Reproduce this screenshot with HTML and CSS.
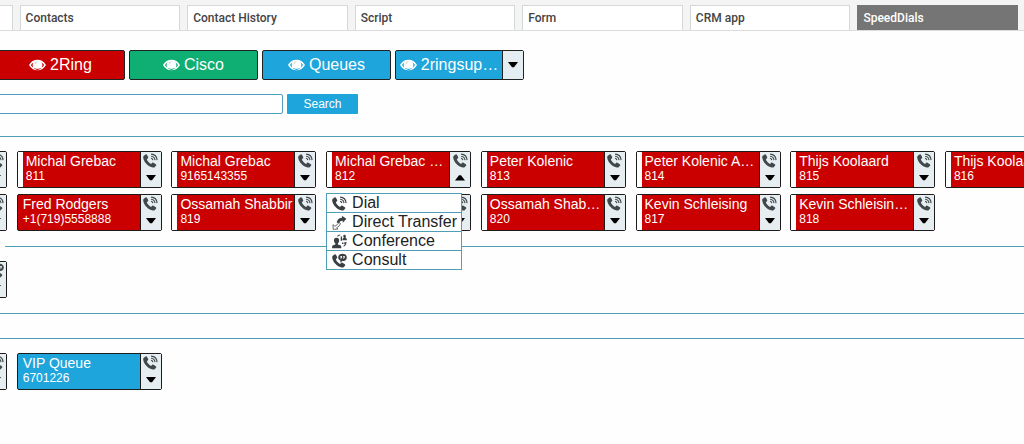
FILE: index.html
```html
<!DOCTYPE html>
<html lang="en">
<head>
<meta charset="utf-8">
<title>SpeedDials</title>
<link rel="stylesheet" href="styles.css">
</head>
<body>
<svg class="sprite" aria-hidden="true">
  <symbol id="eye" viewBox="0 0 18 12">
    <path fill="currentColor" fill-rule="evenodd" d="M0 6C2 2.300 5.200 .4 9 .4s7 1.900 9 5.600c-2 3.700-5.200 5.600-9 5.600S2 9.700 0 6zM2 6c1.600 2.700 4 4 7 4s5.400-1.300 7-4c-.8-1.300-1.800-2.300-3-3a5 5 0 1 1-8 0C3.800 3.700 2.800 4.700 2 6z"/>
    <circle cx="9" cy="5.400" r="4.400" fill="currentColor"/>
    <path d="M6.300 5.300A2.700 2.700 0 0 1 9 2.600" fill="none" stroke="#000" stroke-opacity=".25" stroke-width=".8"/>
  </symbol>
  <symbol id="handset" viewBox="0 0 16 16">
    <path fill="currentColor" d="M.9 2.900 2.700 1.500c.6-.4 1.200-.3 1.500.3l1.300 2.500c.3.600.1 1.100-.4 1.500l-1 .7c.3 1.900 2.300 4.300 4.500 5.100l1-1c.5-.4 1-.5 1.500-.2l2.600 1.500c.6.400.7 1 .3 1.500l-1.300 1.400c-.6.600-1.300.8-2.100.7C5.300 14.600.7 9.300.2 4.700c-.1-.8.100-1.400.7-1.800z"/>
  </symbol>
  <symbol id="call" viewBox="0 0 16 16">
    <use href="#handset"/>
    <path fill="none" stroke="currentColor" stroke-width="1.200" d="M8.600 5.600c1.100.2 1.800.9 1.900 2M8.600 3.400c2.400.2 4 1.800 4.200 4.200M8.600 1.200c3.700.2 6.200 2.700 6.400 6.400"/>
  </symbol>
  <symbol id="consult" viewBox="0 0 16 16">
    <use href="#handset"/>
    <path fill="currentColor" d="M11.200.8c2.700 0 4.600 1.600 4.600 3.900s-1.900 3.900-4.600 3.900L8.700 10l.3-2C7.500 7.300 6.600 6.200 6.600 4.700c0-2.300 1.900-3.900 4.600-3.900z"/>
    <path fill="#fff" d="M9 3.300h1.600v1.500L9.800 6H9l.4-1.200H9zM12 3.300h1.600v1.500L12.800 6H12l.4-1.200H12z"/>
  </symbol>
  <symbol id="transfer" viewBox="0 0 16 16">
    <path fill="currentColor" d="M10.500.8 15.300 4l-3.700 4.300-.3-2.200c-2-.2-3.200.9-4.300 3L5 8c.7-3.300 2.700-5.100 5.700-5.100z"/>
    <path fill="#fff" stroke="currentColor" stroke-width=".8" d="m1 10.300.3 5 5-.3-1.400-1.400c2.200-1 3.400-2.400 4.100-4.600L7.300 8c-.9 1.800-2.200 3-4.300 3.900z"/>
  </symbol>
  <symbol id="conference" viewBox="0 0 16 16">
    <path fill="currentColor" d="M4.800 4c2 0 3 1.300 2.800 3.300-.1 1.300-.7 2.200-1.300 2.800v1l2.500 1c.8.400 1.100.9 1.100 1.700v1.400H.1v-1.400c0-.8.300-1.300 1.100-1.700l2.400-1v-1C2.800 9.500 2.200 8.600 2.100 7.300 1.900 5.300 2.800 4 4.800 4z"/>
    <path fill="none" stroke="currentColor" stroke-width="1.200" d="M5.800 2.500C6.500 1.500 7.400 1 8.800 1"/>
    <path fill="currentColor" d="M9.300 2.600h1.400v4.600H9.300zM13.200.8c1.100 0 1.700.8 1.600 1.800 0 .8-.3 1.200-.6 1.500l1.600.9v1.700h-4.600V5l1.500-.9c-.4-.4-.7-.9-.7-1.600 0-1 .4-1.700 1.200-1.700zM10.700 9h1.500v1.600h-1.500zM13 8.700h2.800l-.7 1.800c-.4 1.400-1.200 2.400-2.600 3.100l-.3-1c.8-.5 1.300-1.200 1.500-2.100H13z"/>
  </symbol>
  <symbol id="down" viewBox="0 0 10 6"><path d="M0 0h10L6 5.300H4z"/></symbol>
  <symbol id="up" viewBox="0 0 10 6"><path d="M0 5.500h10L6 .3H4z"/></symbol>
</svg>

<div class="page">
  <header class="tabbar">
    <nav class="tabs">
      <a class="tab" href="#home" aria-label="Home"></a>
      <a class="tab" href="#contacts">Contacts</a>
      <a class="tab" href="#history">Contact History</a>
      <a class="tab" href="#script">Script</a>
      <a class="tab" href="#form">Form</a>
      <a class="tab" href="#crm">CRM app</a>
      <a class="tab active" href="#speeddials" aria-current="page">SpeedDials</a>
    </nav>
  </header>

  <main>
    <div class="groups">
      <div class="group red"><button class="group-main"><svg class="eye"><use href="#eye"/></svg>2Ring</button></div>
      <div class="group green"><button class="group-main"><svg class="eye"><use href="#eye"/></svg>Cisco</button></div>
      <div class="group blue"><button class="group-main"><svg class="eye"><use href="#eye"/></svg>Queues</button></div>
      <div class="group blue"><button class="group-main"><svg class="eye"><use href="#eye"/></svg>2ringsup…</button><button class="group-more" aria-label="More groups"><svg class="arrow"><use href="#down"/></svg></button></div>
    </div>

    <form class="search">
      <input class="search-box" type="text" aria-label="Search speed dials">
      <button class="search-button" type="button">Search</button>
    </form>

    <section class="section">
      <div class="cards">
        <div class="card red"><button class="info" aria-label="Contact"></button><div class="side"><button class="act" aria-label="Call"><svg class="icon"><use href="#call"/></svg></button><button class="act" aria-label="Options"><svg class="arrow"><use href="#down"/></svg></button></div></div>
        <div class="card red striped"><button class="info"><span class="name">Michal Grebac</span><span class="number">811</span></button><div class="side"><button class="act" aria-label="Call"><svg class="icon"><use href="#call"/></svg></button><button class="act" aria-label="Options"><svg class="arrow"><use href="#down"/></svg></button></div></div>
        <div class="card red striped"><button class="info"><span class="name">Michal Grebac</span><span class="number">9165143355</span></button><div class="side"><button class="act" aria-label="Call"><svg class="icon"><use href="#call"/></svg></button><button class="act" aria-label="Options"><svg class="arrow"><use href="#down"/></svg></button></div></div>
        <div class="card red striped"><button class="info"><span class="name">Michal Grebac …</span><span class="number">812</span></button><div class="side"><button class="act" aria-label="Call"><svg class="icon"><use href="#call"/></svg></button><button class="act" aria-label="Options" aria-expanded="true"><svg class="arrow"><use href="#up"/></svg></button></div>
          <ul class="menu">
            <li><button class="menu-item"><svg class="icon"><use href="#call"/></svg>Dial</button></li>
            <li><button class="menu-item"><svg class="icon"><use href="#transfer"/></svg>Direct Transfer</button></li>
            <li><button class="menu-item"><svg class="icon"><use href="#conference"/></svg>Conference</button></li>
            <li><button class="menu-item"><svg class="icon"><use href="#consult"/></svg>Consult</button></li>
          </ul>
        </div>
        <div class="card red striped"><button class="info"><span class="name">Peter Kolenic</span><span class="number">813</span></button><div class="side"><button class="act" aria-label="Call"><svg class="icon"><use href="#call"/></svg></button><button class="act" aria-label="Options"><svg class="arrow"><use href="#down"/></svg></button></div></div>
        <div class="card red striped"><button class="info"><span class="name">Peter Kolenic A…</span><span class="number">814</span></button><div class="side"><button class="act" aria-label="Call"><svg class="icon"><use href="#call"/></svg></button><button class="act" aria-label="Options"><svg class="arrow"><use href="#down"/></svg></button></div></div>
        <div class="card red striped"><button class="info"><span class="name">Thijs Koolaard</span><span class="number">815</span></button><div class="side"><button class="act" aria-label="Call"><svg class="icon"><use href="#call"/></svg></button><button class="act" aria-label="Options"><svg class="arrow"><use href="#down"/></svg></button></div></div>
        <div class="card red striped"><button class="info"><span class="name">Thijs Koolaard</span><span class="number">816</span></button><div class="side"><button class="act" aria-label="Call"><svg class="icon"><use href="#call"/></svg></button><button class="act" aria-label="Options"><svg class="arrow"><use href="#down"/></svg></button></div></div>

        <div class="card red"><button class="info" aria-label="Contact"></button><div class="side"><button class="act" aria-label="Call"><svg class="icon"><use href="#call"/></svg></button><button class="act" aria-label="Options"><svg class="arrow"><use href="#down"/></svg></button></div></div>
        <div class="card red"><button class="info"><span class="name">Fred Rodgers</span><span class="number">+1(719)5558888</span></button><div class="side"><button class="act" aria-label="Call"><svg class="icon"><use href="#call"/></svg></button><button class="act" aria-label="Options"><svg class="arrow"><use href="#down"/></svg></button></div></div>
        <div class="card red striped"><button class="info"><span class="name">Ossamah Shabbir</span><span class="number">819</span></button><div class="side"><button class="act" aria-label="Call"><svg class="icon"><use href="#call"/></svg></button><button class="act" aria-label="Options"><svg class="arrow"><use href="#down"/></svg></button></div></div>
        <div class="card red striped"><button class="info" aria-label="Contact"></button><div class="side"><button class="act" aria-label="Call"><svg class="icon"><use href="#call"/></svg></button><button class="act" aria-label="Options"><svg class="arrow"><use href="#down"/></svg></button></div></div>
        <div class="card red striped"><button class="info"><span class="name">Ossamah Shab…</span><span class="number">820</span></button><div class="side"><button class="act" aria-label="Call"><svg class="icon"><use href="#call"/></svg></button><button class="act" aria-label="Options"><svg class="arrow"><use href="#down"/></svg></button></div></div>
        <div class="card red striped"><button class="info"><span class="name">Kevin Schleising</span><span class="number">817</span></button><div class="side"><button class="act" aria-label="Call"><svg class="icon"><use href="#call"/></svg></button><button class="act" aria-label="Options"><svg class="arrow"><use href="#down"/></svg></button></div></div>
        <div class="card red striped"><button class="info"><span class="name">Kevin Schleisin…</span><span class="number">818</span></button><div class="side"><button class="act" aria-label="Call"><svg class="icon"><use href="#call"/></svg></button><button class="act" aria-label="Options"><svg class="arrow"><use href="#down"/></svg></button></div></div>
      </div>
    </section>

    <section class="section inset">
      <div class="cards">
        <div class="card green"><button class="info" aria-label="Contact"></button><div class="side"><button class="act" aria-label="Consult"><svg class="icon"><use href="#consult"/></svg></button><button class="act" aria-label="Options"><svg class="arrow"><use href="#down"/></svg></button></div></div>
      </div>
    </section>

    <section class="section empty"></section>

    <section class="section">
      <div class="cards">
        <div class="card blue"><button class="info" aria-label="Queue"></button><div class="side"><button class="act" aria-label="Call"><svg class="icon"><use href="#call"/></svg></button><button class="act" aria-label="Options"><svg class="arrow"><use href="#down"/></svg></button></div></div>
        <div class="card blue"><button class="info"><span class="name">VIP Queue</span><span class="number">6701226</span></button><div class="side"><button class="act" aria-label="Call"><svg class="icon"><use href="#call"/></svg></button><button class="act" aria-label="Options"><svg class="arrow"><use href="#down"/></svg></button></div></div>
      </div>
    </section>
  </main>
</div>
</body>
</html>
```
FILE: styles.css
```css
* { box-sizing: border-box; }

body {
  margin: 0;
  background: #fefefe;
  font-family: "Liberation Sans", Arial, sans-serif;
}

button {
  margin: 0;
  padding: 0;
  border: 0;
  background: none;
  color: inherit;
  font: inherit;
  cursor: pointer;
}

.sprite { display: none; }
.page { overflow: hidden; min-height: 100vh; }

.tabbar {
  padding: 5px 6px 0 0;
  background: #f4f4f4;
  border-bottom: 1px solid #dcdcdc;
}

.tabs {
  display: grid;
  grid-template-columns: repeat(7, 1fr);
  gap: 7px;
  margin-left: -148px;
}

.tab {
  height: 25px;
  padding: 0 5px;
  border: 1px solid #d3d9d9;
  border-bottom: 0;
  background: #fff;
  color: #444;
  font: 500 12px/24px Roboto, sans-serif;
  text-decoration: none;
}

.tab.active {
  border-color: #757575;
  background: #757575;
  color: #fff;
}

.red { background: #ca0000; }
.green { background: #0fae72; }
.blue { background: #1ea5db; }

.groups {
  display: flex;
  gap: 4px;
  margin: 19px 0 0 -4px;
}

.group {
  display: flex;
  width: 129px;
  height: 30px;
  border: 1px solid #222;
  border-radius: 2px;
  color: #fff;
  font-size: 16px;
  line-height: 28px;
}

.group-main {
  display: flex;
  flex: 1;
  align-items: center;
  justify-content: center;
  gap: 4px;
  white-space: nowrap;
}

.eye { flex: none; width: 17px; height: 12px; }

.group-more {
  display: grid;
  flex: none;
  place-items: center;
  width: 21px;
  border-left: 1px solid #222;
  background: #e4edf2;
  color: #000;
}

.arrow { width: 10px; height: 6px; fill: #000; }

.search {
  display: flex;
  gap: 4px;
  margin: 14px 0 22px -4px;
}

.search-box {
  width: 287px;
  height: 20px;
  border: 1px solid #4e9fbd;
  border-radius: 2px;
  background: #fff;
  font-size: 12px;
}

.search-button {
  width: 71px;
  height: 20px;
  border-radius: 1px;
  background: #1ea5db;
  color: #fff;
  font-size: 12px;
  line-height: 20px;
}

.section {
  padding: 14px 0 15px;
  border-top: 1px solid #4e9fb5;
}

.section.inset { margin-left: 5px; }
.section.inset .cards { margin-left: -143px; }
.section.empty { padding: 12px 0; }

.cards {
  display: grid;
  grid-template-columns: repeat(8, 145px);
  justify-content: space-between;
  row-gap: 6px;
  margin: 0 -66px 0 -138px;
}

.card {
  position: relative;
  display: flex;
  height: 37px;
  border: 1px solid #1c1c1c;
  border-radius: 2px;
  color: #fff;
}

.info {
  display: flex;
  flex: 1;
  flex-direction: column;
  min-width: 0;
  padding: 1px 0 0 5px;
  text-align: left;
  white-space: nowrap;
}

.striped .info {
  padding-left: 3px;
  border-left: 5px solid #fff;
}

.name { font-size: 14px; line-height: 17px; }
.number { font-size: 12px; line-height: 13px; }

.side {
  display: flex;
  flex: none;
  flex-direction: column;
  width: 21px;
  border-left: 1px solid #1c1c1c;
  background: #e6eef1;
  color: #41484b;
}

.act {
  display: grid;
  flex: 1;
  place-items: center;
}

.icon { display: block; flex: none; width: 15px; height: 15px; }

.menu {
  position: absolute;
  z-index: 2;
  top: 41px;
  left: -1px;
  margin: 0;
  padding: 0;
  border: 1px solid #4e9fb5;
  background: #fff;
  color: #222;
  list-style: none;
}

.menu .icon { color: #3a4042; }

.menu li + li { border-top: 1px solid #4e9fb5; }

.menu-item {
  display: flex;
  align-items: center;
  gap: 5px;
  width: 100%;
  height: 18px;
  padding: 0 4px 0 5px;
  font-size: 16px;
  line-height: 18px;
}
```
